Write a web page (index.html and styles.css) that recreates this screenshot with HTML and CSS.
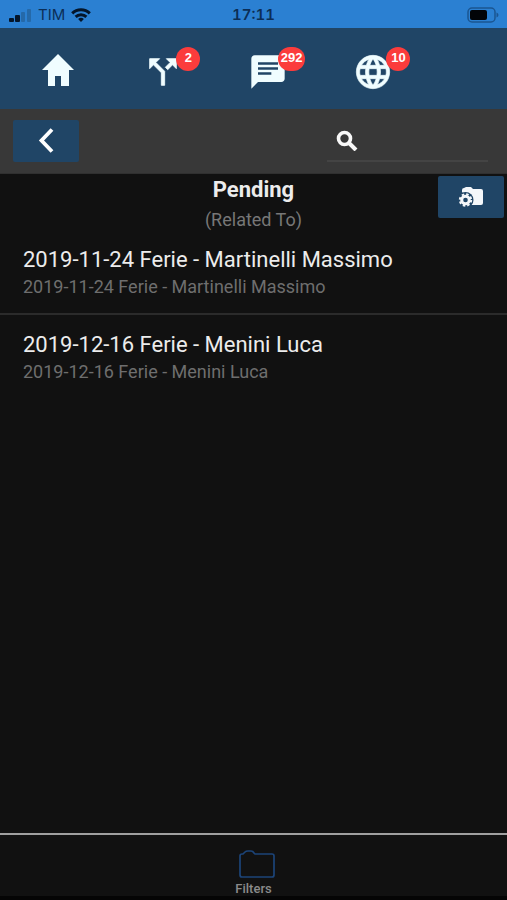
FILE: index.html
```html
<!DOCTYPE html>
<html lang="en">
<head>
<meta charset="utf-8">
<meta name="viewport" content="width=device-width, initial-scale=1">
<title>Pending</title>
<link rel="stylesheet" href="styles.css">
</head>
<body>
<div class="status">
  <div class="status-left">
    <svg width="24" height="13" viewBox="-1 0 24 13" aria-hidden="true">
      <g fill="#04152a"><rect x="0" y="9" width="5" height="4" rx="1"/><rect x="6" y="6" width="5" height="7" rx="1"/></g>
      <g fill="#2569a9"><rect x="12" y="3" width="4" height="10" rx="1"/><rect x="18" y="0" width="4" height="13" rx="1"/></g>
    </svg>
    <span class="carrier">TIM</span>
    <svg width="20" height="14" viewBox="0 0 20 14" fill="none" stroke="#04152a" stroke-width="3" aria-hidden="true">
      <path d="M1.200 5.400a12.600 12.600 0 0 1 17.600 0M4.600 8.900a7.800 7.800 0 0 1 10.800 0"/>
      <path d="M10 14l-2.900-2.900a4.200 4.200 0 0 1 5.800 0z" fill="#04152a" stroke="none"/>
    </svg>
  </div>
  <time class="clock">17:11</time>
  <div class="status-right">
    <svg width="32" height="16" viewBox="0 0 32 16" aria-hidden="true">
      <rect x="1" y="1" width="27" height="14" rx="4" fill="none" stroke="#1b5591" stroke-width="1.500"/>
      <rect x="3" y="3" width="17" height="10" rx="2" fill="#020408"/>
      <path d="M29.500 5.500q2 .6 2 2.500t-2 2.500z" fill="#1b5591"/>
    </svg>
  </div>
</div>
<nav class="tabs" aria-label="Main">
  <a class="tab" href="#home" aria-label="Home">
    <svg width="40" height="40" viewBox="0 0 40 40" fill="#f0fdff" aria-hidden="true"><path d="M20 2 36 18H31V34H23V24H17V34H10V18H4z"/></svg>
  </a>
  <a class="tab" href="#processes" aria-label="Processes">
    <svg width="40" height="40" viewBox="0 0 24 24" fill="#f0fdff" stroke="#f0fdff" stroke-width=".5" aria-hidden="true"><path d="M14 4l2.290 2.290-2.880 2.880 1.420 1.420 2.880-2.880L20 10V4zM10 4H4v6l2.290-2.290 4.710 4.700V20h2v-8.410l-5.290-5.300z"/></svg>
    <span class="badge">2</span>
  </a>
  <a class="tab" href="#messages" aria-label="Messages">
    <svg width="40" height="40" viewBox="0 0 24 24" fill="#f0fdff" aria-hidden="true"><path d="M20 2H4c-1.100 0-2 .9-2 2v18l4-4h14c1.100 0 2-.9 2-2V4c0-1.100-.9-2-2-2zM6 6.200h12v1.500H6zm8 7.500H6v-1.500h8zm4-3H6V9.200h12z"/></svg>
    <span class="badge">292</span>
  </a>
  <a class="tab" href="#web" aria-label="Web">
    <svg width="40" height="40" viewBox="0 0 24 24" fill="#f0fdff" stroke="#f0fdff" stroke-width=".4" aria-hidden="true"><path d="M11.990 2C6.470 2 2 6.480 2 12s4.470 10 9.990 10C17.520 22 22 17.520 22 12S17.520 2 11.990 2zm6.930 6h-2.950c-.32-1.250-.78-2.450-1.380-3.560 1.840.63 3.370 1.910 4.330 3.560zM12 4.040c.83 1.200 1.480 2.530 1.910 3.960h-3.820c.43-1.430 1.080-2.760 1.910-3.960zM4.260 14C4.100 13.360 4 12.690 4 12s.1-1.360.26-2h3.380c-.08.66-.14 1.320-.14 2s.06 1.340.14 2zm.82 2h2.950c.32 1.250.78 2.450 1.380 3.560-1.840-.63-3.370-1.900-4.330-3.560zm2.950-8H5.080c.96-1.660 2.490-2.930 4.330-3.560C8.810 5.550 8.350 6.750 8.030 8zM12 19.960c-.83-1.200-1.480-2.530-1.910-3.960h3.820c-.43 1.430-1.080 2.760-1.910 3.960zM14.340 14H9.660c-.09-.66-.16-1.320-.16-2s.07-1.350.16-2h4.680c.09.65.16 1.320.16 2s-.07 1.340-.16 2zm.25 5.560c.6-1.110 1.060-2.310 1.380-3.560h2.950c-.96 1.650-2.490 2.930-4.330 3.560zM16.360 14c.08-.66.14-1.320.14-2s-.06-1.340-.14-2h3.380c.16.64.26 1.310.26 2s-.1 1.360-.26 2z"/></svg>
    <span class="badge">10</span>
  </a>
</nav>
<div class="toolbar">
  <button class="button" type="button" aria-label="Back">
    <svg width="24" height="28" viewBox="0 0 24 28" fill="none" stroke="#fff" stroke-width="3.800" aria-hidden="true"><path d="M18 2.500 7.500 13.500 18 24.500"/></svg>
  </button>
  <label class="search">
    <svg width="22" height="22" viewBox="0 0 22 22" fill="none" stroke="#f8f8f8" aria-hidden="true"><circle cx="8.500" cy="9.500" r="6" stroke-width="3.600"/><path d="M12.500 13.500 20 21" stroke-width="4"/></svg>
    <input type="search" aria-label="Search">
  </label>
</div>
<main class="content">
  <header class="heading">
    <div class="heading-text">
      <h1>Pending</h1>
      <p>(Related To)</p>
    </div>
    <button class="button" type="button" aria-label="Folder settings">
      <svg width="26" height="22" viewBox="0 0 26 22" aria-hidden="true">
        <path d="M4 6V4q0-2 2-2l2-1h5l2 2h8q2 0 2 2v12q0 2-2 2H12z" fill="#f4f7fa"/>
        <circle cx="7.500" cy="14" r="8" fill="#204566"/>
        <circle cx="7.500" cy="14" r="3.800" fill="none" stroke="#f4f7fa" stroke-width="3"/>
        <circle cx="7.500" cy="14" r="5.700" fill="none" stroke="#f4f7fa" stroke-width="2" stroke-dasharray="2.500 1.977"/>
      </svg>
    </button>
  </header>
  <ul class="list">
    <li><a class="item" href="#1"><span class="item-title">2019-11-24 Ferie - Martinelli Massimo</span><span class="item-sub">2019-11-24 Ferie - Martinelli Massimo</span></a></li>
    <li><a class="item" href="#2"><span class="item-title">2019-12-16 Ferie - Menini Luca</span><span class="item-sub">2019-12-16 Ferie - Menini Luca</span></a></li>
  </ul>
</main>
<footer class="footer">
  <button class="filters" type="button">
    <svg width="43" height="30" viewBox="-7 0 43 30" fill="none" stroke="#1c4478" stroke-width="1.700" aria-hidden="true"><path d="M1 7q0-2 2-2h1l2-2q1-1 3-1h3q2 0 3 2l1 1h17q2 0 2 2v19q0 2-2 2H3q-2 0-2-2z"/></svg>
    <span>Filters</span>
  </button>
</footer>
</body>
</html>
```
FILE: styles.css
```css
* {
  box-sizing: border-box;
}

body {
  margin: 0;
  min-height: 100vh;
  display: flex;
  flex-direction: column;
  background: #111;
  color: #ececec;
  font-family: Roboto, sans-serif;
}

svg {
  display: block;
  flex: none;
}

h1, p, ul {
  margin: 0;
  padding: 0;
}

a {
  color: inherit;
  text-decoration: none;
}

button {
  border: 0;
  padding: 0;
  font: inherit;
}

.status {
  display: grid;
  grid-template-columns: 1fr auto 1fr;
  align-items: center;
  height: 28px;
  padding: 0 8px;
  background: #2b80d2;
  color: #0b2e57;
  font: 15px/30px Inter, sans-serif;
}

.status-left {
  display: flex;
  align-items: center;
  gap: 6px;
}

.clock {
  font-weight: 600;
  font-variant-numeric: tabular-nums;
}

.status-right {
  justify-self: end;
}

.tabs {
  display: grid;
  grid-template-columns: repeat(4, 1fr);
  height: 81px;
  padding: 0 16% 0 6px;
  background: #204566;
}

.tab {
  display: grid;
  place-items: center;
  align-content: center;
  position: relative;
  padding-top: 6px;
}

.badge {
  position: absolute;
  top: 19px;
  right: calc(50% - 37px);
  min-width: 24px;
  height: 24px;
  padding: 0 3px;
  border-radius: 12px;
  background: #fb3c3c;
  color: #fff;
  text-align: center;
  font: bold 13px/22px "Liberation Sans", sans-serif;
}

.toolbar {
  display: flex;
  justify-content: space-between;
  align-items: center;
  height: 65px;
  padding: 0 19px 0 13px;
  background: #383838;
  border-bottom: 1px solid #303030;
}

.button {
  display: grid;
  place-items: center;
  width: 66px;
  height: 42px;
  border-radius: 2px;
  background: #204566;
}

.search {
  display: flex;
  align-items: center;
  gap: 8px;
  width: 161px;
  height: 42px;
  padding: 0 9px;
  border-bottom: 2px solid #444;
}

.search input {
  flex: 1;
  min-width: 0;
  border: 0;
  outline: 0;
  background: transparent;
  color: #fff;
  font: 16px Roboto, sans-serif;
}

.content {
  flex: 1;
}

.heading {
  display: grid;
  grid-template-columns: 1fr auto 1fr;
  height: 56px;
  padding: 0 3px;
}

.heading-text {
  grid-column: 2;
  text-align: center;
}

.heading h1 {
  font-size: 22px;
  line-height: 32px;
  font-weight: 700;
}

.heading p {
  margin-top: 2px;
  color: #777;
  font-size: 18px;
  line-height: 24px;
}

.heading .button {
  justify-self: end;
  margin-top: 2px;
}

.list {
  list-style: none;
}

.item {
  display: flex;
  flex-direction: column;
  padding: 16px 23px 13px;
}

.list li + li {
  border-top: 2px solid #2b2b2b;
}

.item-title {
  font-size: 22px;
  line-height: 28px;
}

.item-sub {
  color: #6e6e6e;
  font-size: 18px;
  line-height: 26px;
}

.footer {
  display: flex;
  justify-content: center;
  height: 67px;
  border-top: 2px solid #a0a0a0;
  border-bottom: 4px solid #050505;
}

.filters {
  display: flex;
  flex-direction: column;
  align-items: center;
  gap: 2px;
  padding-top: 14px;
  background: transparent;
  color: #8a8a8a;
  font-size: 13px;
  font-weight: 500;
  line-height: 16px;
}
```
